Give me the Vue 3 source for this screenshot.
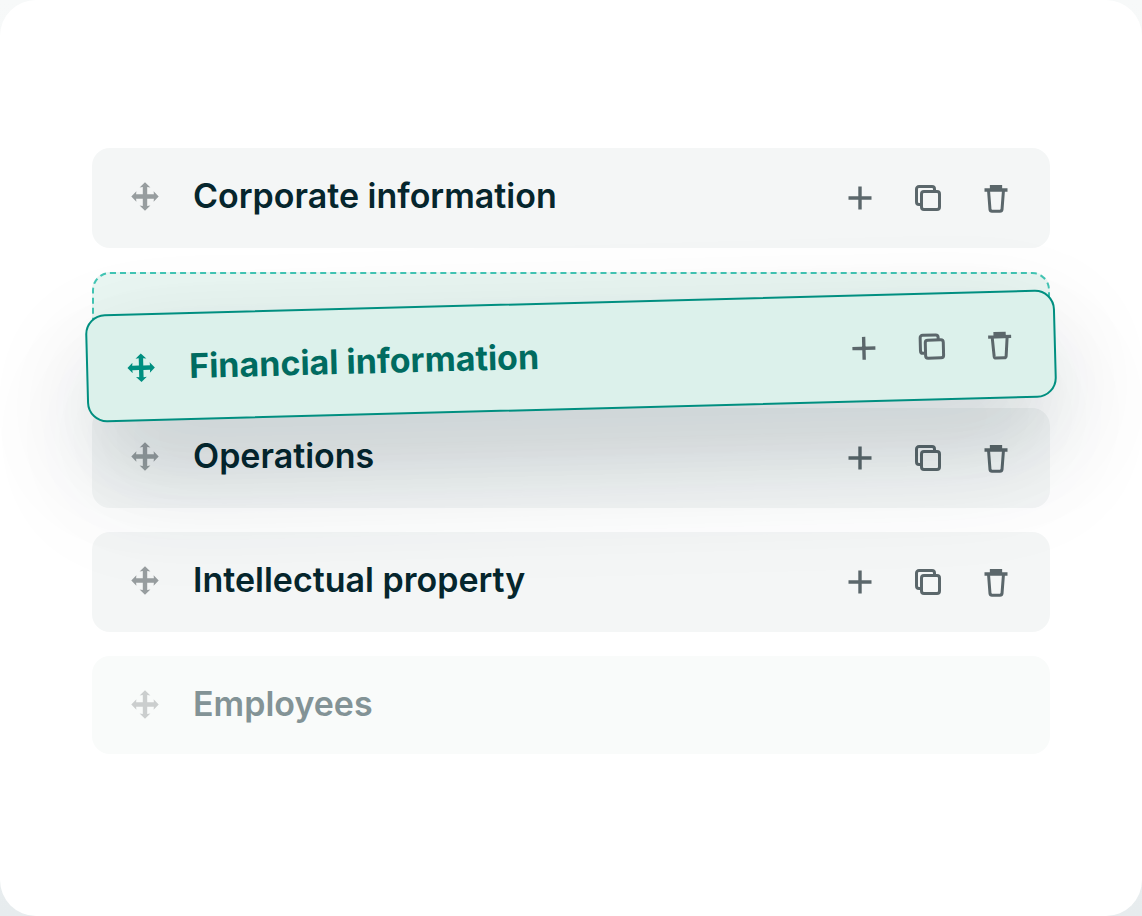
<script setup>
import { ref } from 'vue';

const sections = ref([
    { id: 1, title: 'Corporate information', state: 'normal' },
    { id: 2, title: 'Financial information', state: 'dragging' },
    { id: 3, title: 'Operations', state: 'normal' },
    { id: 4, title: 'Intellectual property', state: 'normal' },
    { id: 5, title: 'Employees', state: 'disabled' },
])

const movePath = 'M16 2.2L21.4 7.4L18.2 7V14.3H24.9L24.6 11.2L29.7 16.5L24.6 21.8L24.9 18.7H18.2V26L21.4 25.6L16 30.8L10.6 25.6L13.8 26V18.7H7.1L7.4 21.8L2.3 16.5L7.4 11.2L7.1 14.3H13.8V7L10.6 7.4Z'
</script>
<template>
    <main class="panel">
        <ul class="list">
            <li v-for="item in sections" :key="item.id" :class="item.state === 'dragging' ? 'slot' : 'entry'">
                <div class="row" :class="item.state">
                    <div class="label">
                        <button class="handle" type="button" :aria-label="'Move ' + item.title">
                            <svg viewBox="0 0 32 32">
                                <path :d="movePath" fill="currentColor" />
                            </svg>
                        </button>
                        <span class="title">{{ item.title }}</span>
                    </div>
                    <div class="actions" v-if="item.state !== 'disabled'">
                        <button type="button" aria-label="Add">
                            <svg viewBox="0 0 32 32">
                                <path d="M16 4.5V27.5M4.5 16H27.5" stroke-width="3.4" />
                            </svg>
                        </button>
                        <button type="button" aria-label="Duplicate">
                            <svg viewBox="0 0 32 32">
                                <path d="M8 22.5H7A2.5 2.5 0 0 1 4.5 20V7A2.5 2.5 0 0 1 7 4.5H20A2.5 2.5 0 0 1 22.5 7V9" />
                                <rect x="9.5" y="9.5" width="18" height="18" rx="2.5" />
                            </svg>
                        </button>
                        <button type="button" aria-label="Delete">
                            <svg viewBox="0 0 32 32">
                                <path d="M4.5 8H27.5M11.5 8V4.7H20.5V8" stroke-width="3.3" />
                                <path d="M8.5 8L10 27.5Q10.2 29.2 12 29.2H20Q21.8 29.2 22 27.5L23.5 8" />
                            </svg>
                        </button>
                    </div>
                </div>
            </li>
        </ul>
    </main>
</template>
<style>
body {
    margin: 0;
    background: linear-gradient(to bottom, #f7f9f9, #e7ecee);
}
</style>
<style scoped>
.panel {
    box-sizing: border-box;
    min-height: 100vh;
    padding: 148px 92px;
    background: #ffffff;
    border-radius: 36px;
    overflow: hidden;
    font-family: Inter, "Liberation Sans", sans-serif;
}

.list {
    display: flex;
    flex-direction: column;
    gap: 24px;
    margin: 0;
    padding: 0;
    list-style: none;
}

.row {
    box-sizing: border-box;
    display: flex;
    align-items: center;
    justify-content: space-between;
    min-height: 100px;
    padding: 0 38px 0 37px;
    border-radius: 18px;
    background: #f4f6f6;
    color: #06262d;
}

.label {
    display: flex;
    align-items: center;
    gap: 32px;
    padding-bottom: 4px;
}

.title {
    font-size: 34px;
    font-weight: 600;
    line-height: 40px;
}

.actions {
    display: flex;
    gap: 36px;
    color: #5b676b;
}

button {
    width: 32px;
    height: 32px;
    padding: 0;
    border: none;
    background: none;
    color: inherit;
    cursor: pointer;
}

.handle {
    color: #979d9f;
    cursor: move;
}

svg {
    display: block;
    width: 32px;
    height: 32px;
}

.actions svg {
    fill: none;
    stroke: currentColor;
    stroke-width: 3;
}

/* empty place that the lifted row came from */
.slot {
    position: relative;
    z-index: 1;
    box-sizing: border-box;
    height: 112px;
    border: 2px dashed #42c5b4;
    border-radius: 18px;
    background: #e9f6f2;
}

.dragging {
    position: absolute;
    top: 28px;
    left: -8px;
    right: -8px;
    min-height: 108px;
    padding: 0 38px 0 37px;
    border: 2px solid #008f80;
    border-radius: 20px;
    background: #dcf1eb;
    color: #006b60;
    transform: rotate(-1.5deg);
    box-shadow: 0 50px 70px -20px rgba(6, 30, 40, 0.05), 0 70px 120px 10px rgba(20, 70, 90, 0.06), 0 40px 110px rgba(6, 30, 40, 0.12);
}

.dragging .label {
    padding-bottom: 0;
}

.dragging .title {
    font-weight: 700;
}

.dragging .handle {
    color: #008f80;
}

.disabled {
    min-height: 98px;
    background: #f9fbfa;
    color: #839396;
}

.disabled .label {
    padding-bottom: 2px;
}

.disabled .handle {
    color: #cbcece;
}
</style>
